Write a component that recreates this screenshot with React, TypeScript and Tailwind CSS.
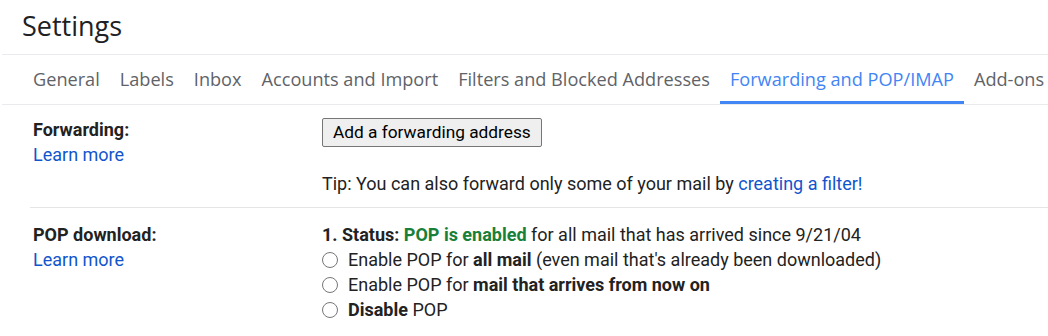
import React from "react";

const tabs = [
  "General",
  "Labels",
  "Inbox",
  "Accounts and Import",
  "Filters and Blocked Addresses",
  "Forwarding and POP/IMAP",
  "Add-ons",
];

function Radio({ children }: { children: React.ReactNode }) {
  return (
    <div className="flex items-center h-[25px]">
      <span className="w-[16px] h-[16px] rounded-full border border-[#767676] bg-white mr-[10px] shrink-0" />
      <span>{children}</span>
    </div>
  );
}

export default function App() {
  return (
    <div className="w-[1048px] h-[336px] bg-white overflow-hidden text-[#222]" style={{ fontFamily: "Roboto, 'Liberation Sans', sans-serif" }}>
      <div className="h-[54px] pl-[22px] flex items-center">
        <h1 className="text-[27px] text-[#202124] leading-none pb-[4px]" style={{ fontFamily: "'Open Sans', Roboto, sans-serif" }}>Settings</h1>
      </div>
      <div className="ml-[2px] border-t border-b border-[#e8eaed] h-[51px] flex pl-[21px] pt-[3px]" style={{ fontFamily: "'Open Sans', Roboto, sans-serif" }}>
        {tabs.map((t) => {
          const active = t === "Forwarding and POP/IMAP";
          return (
            <div
              key={t}
              className={
                "px-[10px] flex items-center text-[18.15px] whitespace-nowrap border-b-[3px] " +
                (active ? "text-[#4285f4] border-[#4285f4]" : "text-[#5f6368] border-transparent")
              }
            >
              {t}
            </div>
          );
        })}
      </div>
      <div className="pl-[33px] text-[18px]">
        <div className="flex border-b border-[#e5e5e5] ml-[-3px] pl-[3px] pb-[11px]">
          <div className="w-[289px] pt-[12px] leading-[25px]">
            <div className="font-bold">Forwarding:</div>
            <a className="text-[#1155cc] block">Learn more</a>
          </div>
          <div className="pt-[13px]">
            <button className="h-[29px] px-[10px] border border-[#767676] rounded-[2px] bg-[#efefef] text-[17.3px] leading-none text-black">
              Add a forwarding address
            </button>
            <div className="mt-[24px] leading-[25px]">
              Tip: You can also forward only some of your mail by <a className="text-[#1155cc]">creating a filter!</a>
            </div>
          </div>
        </div>
        <div className="flex pt-[14px] leading-[25px]">
          <div className="w-[289px]">
            <div className="font-bold">POP download:</div>
            <a className="text-[#1155cc] block">Learn more</a>
          </div>
          <div>
            <div>
              <b>1. Status: </b>
              <b className="text-[#188038]">POP is enabled</b> for all mail that has arrived since 9/21/04
            </div>
            <Radio>
              Enable POP for <b>all mail</b> (even mail that's already been downloaded)
            </Radio>
            <Radio>
              Enable POP for <b>mail that arrives from now on</b>
            </Radio>
            <Radio>
              <b>Disable</b> POP
            </Radio>
          </div>
        </div>
      </div>
    </div>
  );
}
